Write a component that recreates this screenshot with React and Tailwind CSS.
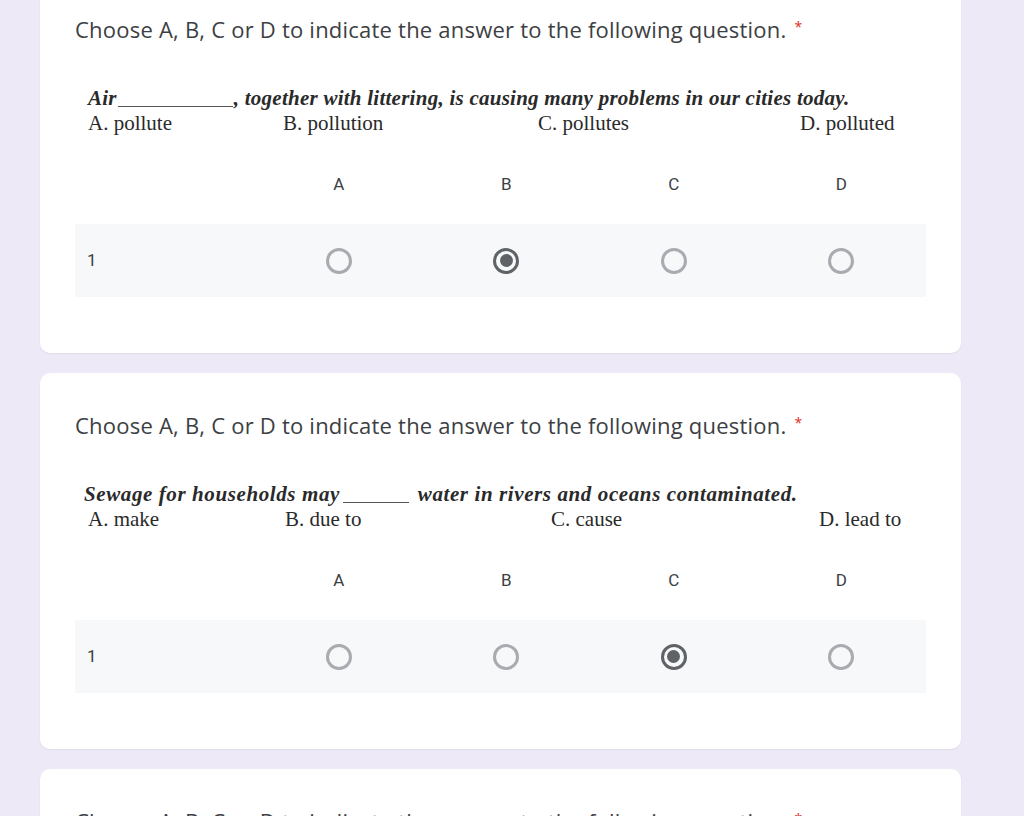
import React from "react";

const sans = { fontFamily: "'Open Sans', Roboto, Arial, sans-serif" };
const roboto = { fontFamily: "Roboto, 'Open Sans', Arial, sans-serif" };
const serif = { fontFamily: "'Liberation Serif', 'Times New Roman', serif" };

function Radio({ checked }) {
  return (
    <div
      className={
        "w-[26px] h-[26px] rounded-full border-[3px] flex items-center justify-center " +
        (checked ? "border-[#5f6368]" : "border-[#a8abaf]")
      }
    >
      {checked && <div className="w-[13px] h-[13px] rounded-full bg-[#5f6368]" />}
    </div>
  );
}

function Card({ children }) {
  return (
    <div className="bg-white rounded-[10px] w-[921px] pt-[40px] pb-[56px] px-[35px] shadow-[0_1px_2px_rgba(0,0,0,0.06)]">
      {children}
    </div>
  );
}

function Title() {
  return (
    <div className="h-[24px] leading-[24px] text-[22px] text-[#3c4043] tracking-[0.22px] whitespace-nowrap" style={sans}>
      Choose A, B, C or D to indicate the answer to the following question.
      <span className="text-[#d93025] text-[14px] align-top ml-[8px] relative top-[-2px]">*</span>
    </div>
  );
}

function Grid({ selected }) {
  const cols = ["A", "B", "C", "D"];
  return (
    <div style={roboto}>
      <div className="grid grid-cols-[180px_repeat(4,167.5px)] h-[20px] leading-[20px] text-[17px] text-[#3c4043]">
        <div />
        {cols.map((c) => (
          <div key={c} className="text-center">{c}</div>
        ))}
      </div>
      <div className="mt-[30px] h-[73px] bg-[#f7f8fa] grid grid-cols-[180px_repeat(4,167.5px)] items-center">
        <div className="pl-[12px] text-[17px] text-[#3c4043]">1</div>
        {cols.map((c) => (
          <div key={c} className="flex justify-center">
            <Radio checked={selected === c} />
          </div>
        ))}
      </div>
    </div>
  );
}

export default function App() {
  return (
    <div className="w-[1024px] h-[816px] overflow-hidden bg-[#ede9f6]">
      <div className="flex flex-col gap-[20px] pl-[40px] mt-[-23px]">
        <Card>
          <Title />
          <div className="mt-[45px] pl-[13px] text-[21px] text-[#2a2a2a]" style={serif}>
            <div className="h-[25px] leading-[25px] font-bold italic flex items-end tracking-[0.25px] whitespace-nowrap">
              <span className="leading-[25px]">Air</span>
              <span className="inline-block w-[115px] border-b border-[#555] mb-[4px] mx-[1px]" />
              <span className="leading-[25px]">, together with littering, is causing many problems in our cities today.</span>
            </div>
            <div className="h-[25px] leading-[25px] flex whitespace-nowrap">
              <span className="w-[195px]">A. pollute</span>
              <span className="w-[255px]">B. pollution</span>
              <span className="w-[262px]">C. pollutes</span>
              <span>D. polluted</span>
            </div>
          </div>
          <div className="mt-[38px]">
            <Grid selected="B" />
          </div>
        </Card>
        <Card>
          <Title />
          <div className="mt-[45px] pl-[9px] text-[21px] text-[#2a2a2a]" style={serif}>
            <div className="h-[25px] leading-[25px] font-bold italic flex items-end tracking-[0.6px] whitespace-nowrap">
              <span className="leading-[25px]">Sewage for households may</span>
              <span className="inline-block w-[66px] border-b border-[#555] mb-[4px] mx-[3px]" />
              <span className="leading-[25px]">&nbsp;water in rivers and oceans contaminated.</span>
            </div>
            <div className="h-[25px] leading-[25px] flex pl-[4px] whitespace-nowrap">
              <span className="w-[197px]">A. make</span>
              <span className="w-[266px]">B. due to</span>
              <span className="w-[268px]">C. cause</span>
              <span>D. lead to</span>
            </div>
          </div>
          <div className="mt-[38px]">
            <Grid selected="C" />
          </div>
        </Card>
        <Card>
          <Title />
          <div className="h-[300px]" />
        </Card>
      </div>
    </div>
  );
}
